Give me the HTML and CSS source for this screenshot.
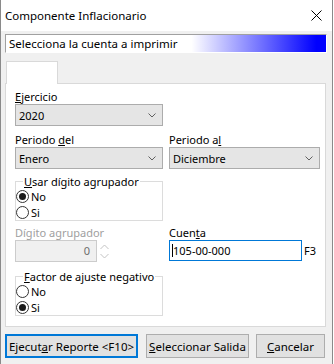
FILE: index.html
```html
<!DOCTYPE html>
<html>
<head>
  <title>Componente Inflacionario</title>
  <link rel="stylesheet" href="styles.css">
</head>
<body>
  <div class="window">
    <div class="titlebar">
      <span>Componente Inflacionario</span>
      <svg class="close" width="11" height="11" viewBox="0 0 11 11">
        <path d="M0.5 0.5 L10.5 10.5 M10.5 0.5 L0.5 10.5" stroke="#000" stroke-width="1" fill="none"/>
      </svg>
    </div>
    <div class="content">
      <div class="banner">Selecciona la cuenta a imprimir</div>
      <div class="tabs"><div class="tab"></div></div>

      <div class="panel">
        <div class="field">
          <label><u>E</u>jercicio</label>
          <div class="combo">
            <span>2020</span>
            <svg width="8" height="5" viewBox="0 0 8 5"><path d="M0.5 0.5 L4 4 L7.5 0.5" stroke="#606060" fill="none"/></svg>
          </div>
        </div>

        <div class="row">
          <div class="field">
            <label>Periodo <u>d</u>el</label>
            <div class="combo">
              <span>Enero</span>
              <svg width="8" height="5" viewBox="0 0 8 5"><path d="M0.5 0.5 L4 4 L7.5 0.5" stroke="#606060" fill="none"/></svg>
            </div>
          </div>
          <div class="field wide">
            <label>Periodo a<u>l</u></label>
            <div class="combo">
              <span>Diciembre</span>
              <svg width="8" height="5" viewBox="0 0 8 5"><path d="M0.5 0.5 L4 4 L7.5 0.5" stroke="#606060" fill="none"/></svg>
            </div>
          </div>
        </div>

        <fieldset class="group first">
          <legend><u>U</u>sar dígito agrupador</legend>
          <div class="option"><span class="radio checked"></span>No</div>
          <div class="option"><span class="radio"></span>Si</div>
        </fieldset>

        <div class="row second">
          <div class="field disabled">
            <label>Dígito agrupador</label>
            <div class="spin">
              <div class="spinbox">0</div>
              <svg width="11" height="21" viewBox="0 0 11 21">
                <path d="M1.5 8 L5.5 4 L9.5 8 M1.5 13 L5.5 17 L9.5 13" stroke="#c4c4c4" fill="none"/>
              </svg>
            </div>
          </div>
          <div class="field wide">
            <label>Cuen<u>t</u>a</label>
            <div class="account">
              <div class="textbox"><span class="caret"></span>105-00-000</div>
              <span class="key">F3</span>
            </div>
          </div>
        </div>

        <fieldset class="group last">
          <legend><u>F</u>actor de ajuste negativo</legend>
          <div class="option"><span class="radio"></span>No</div>
          <div class="option"><span class="radio checked"></span>Si</div>
        </fieldset>
      </div>

      <div class="buttons">
        <button class="btn default">Ejecut<u>a</u>r Reporte &lt;F10&gt;</button>
        <button class="btn select-out"><u>S</u>eleccionar Salida</button>
        <button class="btn cancel"><u>C</u>ancelar</button>
      </div>
    </div>
  </div>
</body>
</html>
```

FILE: styles.css
```css
* {
  box-sizing: border-box;
}

body {
  margin: 0;
  font-family: "Noto Sans", sans-serif;
  font-size: 11px;
  color: #000;
  background: #fff;
}

.window {
  width: 333px;
  height: 364px;
  border-left: 1px solid #8a8a8a;
  border-right: 1px solid #8a8a8a;
  background: #f0f0f0;
}

.titlebar {
  height: 31px;
  background: #fff;
  display: flex;
  align-items: center;
  justify-content: space-between;
  padding: 0 10px 0 4px;
  font-size: 11.5px;
}

.content {
  padding: 3px 6px 0 4px;
}

.banner {
  height: 19px;
  margin-right: -1px;
  padding-left: 3px;
  line-height: 17px;
  font-size: 11.5px;
  border: 1px solid;
  border-color: #a0a0a0 #fff #fff #a0a0a0;
  background: linear-gradient(to right, #fff 58%, #0000ff 97%);
}

.tabs {
  display: flex;
  margin-top: 8px;
  padding-left: 1px;
}

.tab {
  position: relative;
  z-index: 1;
  width: 52px;
  height: 23px;
  margin-bottom: -1px;
  background: #fff;
  border: 1px solid #d9d9d9;
  border-bottom: none;
}

.panel {
  height: 244px;
  padding: 6px 0 0 9px;
  background: #fff;
  border: 1px solid #d9d9d9;
}

.row {
  display: flex;
  gap: 6px;
  margin-top: 7px;
}

.row.second {
  margin-top: 5px;
}

.field {
  width: 148px;
}

.field.wide {
  width: 151px;
}

.field label {
  display: block;
  height: 14px;
  line-height: 14px;
  white-space: nowrap;
}

.field.disabled label {
  color: #a0a0a0;
}

.combo {
  display: flex;
  align-items: center;
  justify-content: space-between;
  height: 22px;
  padding: 0 6px 0 3px;
  background: #e5e5e5;
  border: 1px solid #acacac;
}

.group {
  width: 148px;
  margin: 6px 0 0 0;
  padding: 0;
  border: 1px solid #dcdcdc;
}

.group.last {
  margin-top: 8px;
}

.group legend {
  margin-left: 7px;
  padding: 0 1px;
  line-height: 13px;
  white-space: nowrap;
}

.option {
  display: flex;
  align-items: center;
  gap: 2px;
  height: 16px;
}

.radio {
  display: flex;
  align-items: center;
  justify-content: center;
  width: 13px;
  height: 13px;
  border: 1px solid #333;
  border-radius: 50%;
  background: #fff;
}

.radio.checked::after {
  content: "";
  width: 7px;
  height: 7px;
  border-radius: 50%;
  background: #1a1a1a;
}

.spin {
  display: flex;
  align-items: center;
  gap: 2px;
}

.spinbox {
  width: 82px;
  height: 22px;
  padding-right: 6px;
  line-height: 20px;
  text-align: right;
  color: #6d6d6d;
  background: #f0f0f0;
  border: 1px solid #cccccc;
}

.account {
  display: flex;
  align-items: center;
  gap: 2px;
}

.textbox {
  display: flex;
  align-items: center;
  width: 133px;
  height: 21px;
  padding-left: 2px;
  background: #fff;
  border: 1px solid #0078d7;
}

.caret {
  width: 1px;
  height: 13px;
  background: #000;
}

.buttons {
  display: flex;
  gap: 7px;
  margin-top: 7px;
}

.btn {
  height: 24px;
  padding: 0;
  font-family: inherit;
  font-size: 11.5px;
  white-space: nowrap;
  color: #000;
  background: #e1e1e1;
  border: 1px solid #adadad;
}

.btn.default {
  width: 133px;
  border: 2px solid #0078d7;
}

.btn.select-out {
  width: 103px;
  margin-left: 1px;
}

.btn.cancel {
  width: 69px;
}
```
